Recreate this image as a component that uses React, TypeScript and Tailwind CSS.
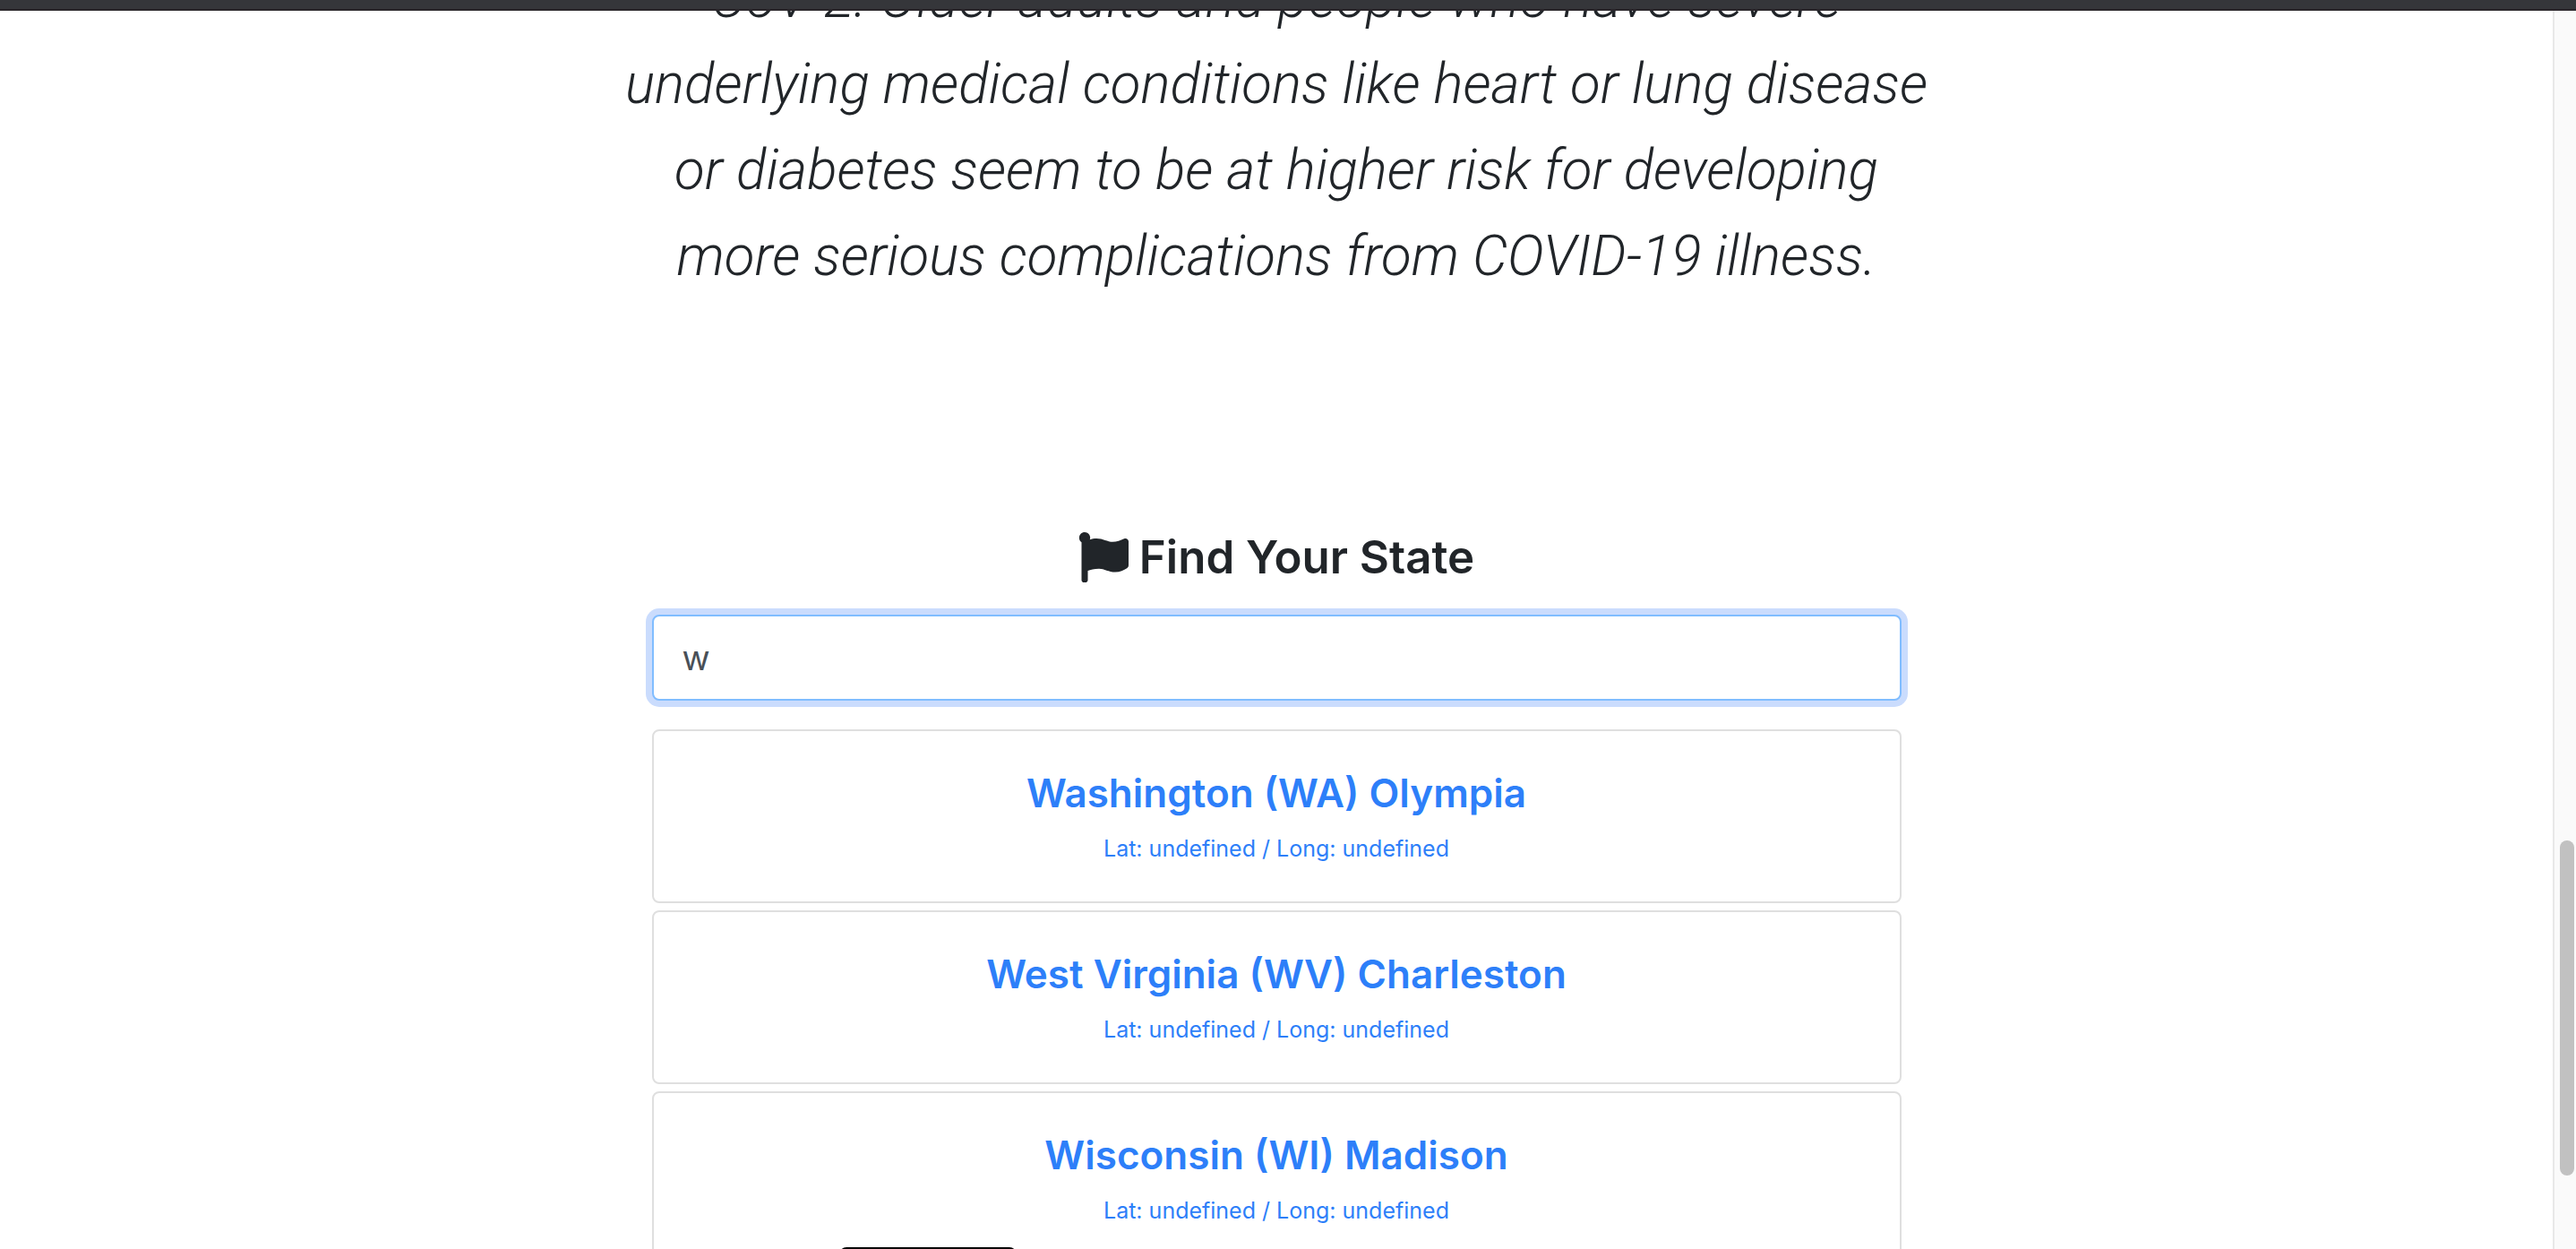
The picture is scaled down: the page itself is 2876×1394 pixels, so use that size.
import { useState } from "react"
import { FaFlag } from "react-icons/fa"

type Place = {
  name: string
  abbr: string
  capital: string
  lat?: string
  long?: string
}

const places: Place[] = [
  { name: "Washington", abbr: "WA", capital: "Olympia" },
  { name: "West Virginia", abbr: "WV", capital: "Charleston" },
  { name: "Wisconsin", abbr: "WI", capital: "Madison" },
]

const quote = [
  "CoV-2. Older adults and people who have severe",
  "underlying medical conditions like heart or lung disease",
  "or diabetes seem to be at higher risk for developing",
  "more serious complications from COVID-19 illness.",
]

function PlaceCard({ place }: { place: Place }) {
  return (
    <li className="rounded-lg border-2 border-[#dfdfdf] bg-white p-10 text-center text-[#2d7ff9]">
      <h4 className="text-[44px] leading-[58px] font-semibold">
        {place.name} ({place.abbr}) {place.capital}
      </h4>
      <p className="mt-3.5 text-[25px] leading-[38px]">
        Lat: {String(place.lat)} / Long: {String(place.long)}
      </p>
    </li>
  )
}

export default function App() {
  const [search, setSearch] = useState("w")

  const matches = places.filter(
    (place) =>
      search.length > 0 &&
      (place.name.toLowerCase().startsWith(search.toLowerCase()) ||
        place.abbr.toLowerCase().startsWith(search.toLowerCase()))
  )

  return (
    <div className="relative flex h-screen flex-col overflow-hidden bg-white font-['Inter','Liberation_Sans',sans-serif] text-[#212529]">
      {/* Browser chrome */}
      <div className="h-3 shrink-0 border-b-2 border-[#29252a] bg-[#35363a]" />

      <div className="flex min-h-0 flex-1">
        <main className="flex flex-1 flex-col items-center overflow-hidden">
          <p className="-mt-[62px] text-center font-['Roboto','Liberation_Sans',sans-serif] text-[62px] leading-[96px] font-light whitespace-nowrap italic">
            {quote.map((line) => (
              <span key={line} className="block">
                {line}
              </span>
            ))}
          </p>

          <section className="mt-[254px] w-1/2 px-[15px]">
            <h3 className="flex items-center justify-center gap-3 text-[51px] leading-[68px] font-semibold">
              <FaFlag className="size-14" />
              <label htmlFor="search">Find Your State</label>
            </h3>
            <input
              id="search"
              type="text"
              value={search}
              onChange={(e) => setSearch(e.target.value)}
              className="mt-[30px] block h-24 w-full rounded-lg border-2 border-[#80bdff] bg-white px-8 text-[38px] text-[#495057] ring-7 ring-[#cadcfd] outline-none"
            />
            <ul className="mt-8 flex flex-col gap-2">
              {matches.map((place) => (
                <PlaceCard key={place.abbr} place={place} />
              ))}
            </ul>
          </section>
        </main>

        {/* Scrollbar */}
        <div className="flex w-[26px] shrink-0 justify-center border-l-2 border-[#e8e8e8] bg-[#fafafa] pt-[926px] pl-1">
          <div className="h-[374px] w-4 rounded-full bg-[#c1c1c1]" />
        </div>
      </div>

      {/* Top edge of the floating panel */}
      <div className="absolute -bottom-8 left-[937px] h-[34px] w-[198px] rounded-lg bg-black shadow-lg" />
    </div>
  )
}
